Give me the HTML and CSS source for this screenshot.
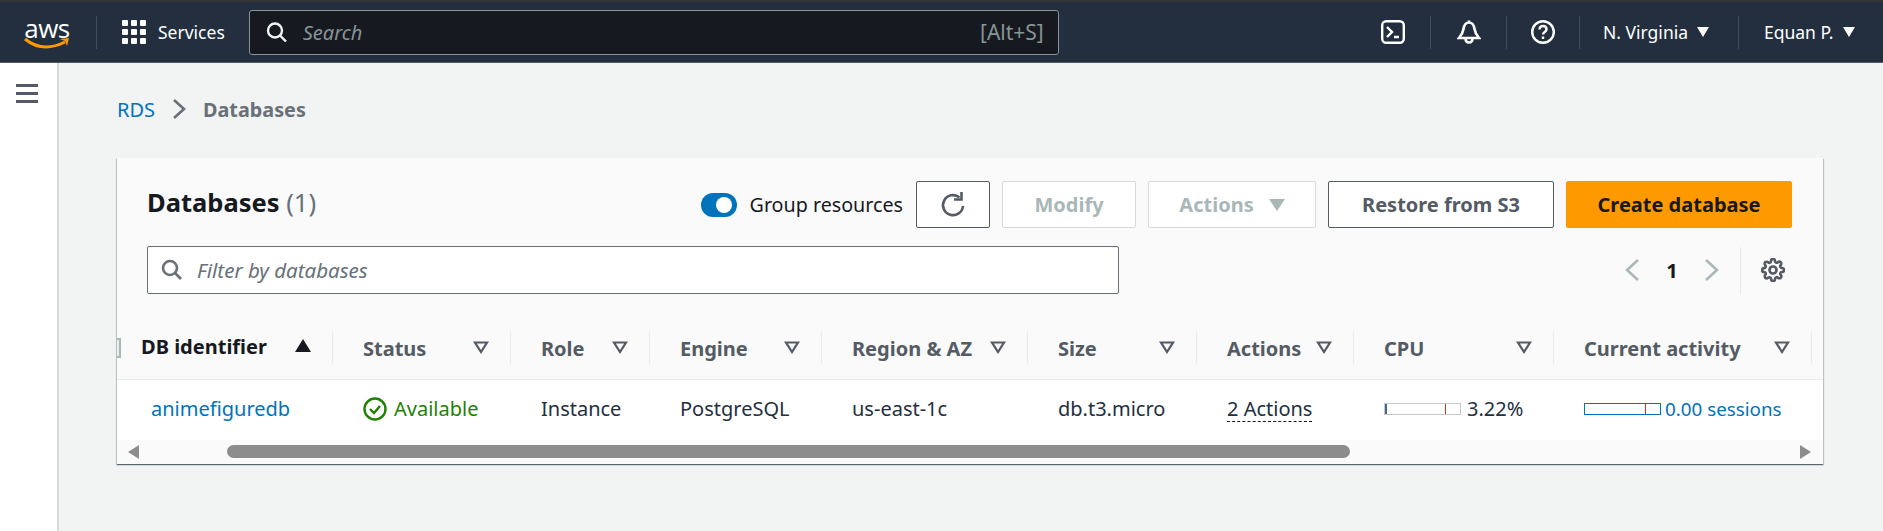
FILE: index.html
```html
<!DOCTYPE html>
<html lang="en">
<head>
    <meta charset="UTF-8">
    <meta name="viewport" content="width=device-width, initial-scale=1.0">
    <title>Databases</title>
    <link rel="stylesheet" href="styles.css">
</head>
<body>
    <nav class="topbar">
        <div class="logo">
            <span class="logo-text">aws</span>
            <svg class="logo-smile" width="46" height="14" viewBox="0 0 46 14"><path d="M1 2c6 5 13 8 21 8 7 0 13-2 19-5" fill="none" stroke="#f90" stroke-width="3"/><path d="M36 2l9-1-2 8-2-5z" fill="#f90"/></svg>
        </div>
        <span class="nav-divider logo-divider"></span>
        <div class="services">
            <svg width="24" height="24" viewBox="0 0 24 24" fill="#fff"><rect width="6" height="6" rx="1"/><rect x="9" width="6" height="6" rx="1"/><rect x="18" width="6" height="6" rx="1"/><rect y="9" width="6" height="6" rx="1"/><rect x="9" y="9" width="6" height="6" rx="1"/><rect x="18" y="9" width="6" height="6" rx="1"/><rect y="18" width="6" height="6" rx="1"/><rect x="9" y="18" width="6" height="6" rx="1"/><rect x="18" y="18" width="6" height="6" rx="1"/></svg>
            <span>Services</span>
        </div>
        <div class="nav-search">
            <svg width="22" height="20" viewBox="0 0 22 20" fill="none" stroke="#f2f3f3" stroke-width="2.4"><circle cx="9" cy="8.5" r="7"/><path d="M14 13.5l6 6"/></svg>
            <span class="nav-search-text">Search</span>
            <span class="nav-search-key">[Alt+S]</span>
        </div>
        <div class="nav-right">
            <div class="nav-icon">
                <svg width="24" height="24" viewBox="0 0 24 24" fill="none" stroke="#fff" stroke-width="2.4"><rect x="1.2" y="1.2" width="21.6" height="21.6" rx="4"/><path d="M6 7l5 5-5 5M13 17h5"/></svg>
            </div>
            <span class="nav-divider"></span>
            <div class="nav-icon nav-icon-bell">
                <svg width="24" height="24" viewBox="0 0 24 24" fill="none" stroke="#fff" stroke-width="2.6"><path d="M12 2.500c-3.500 0-5 3-5.500 6.500-.5 3.500-2 6-4.500 9h20c-2.500-3-4-5.500-4.500-9-.5-3.500-2-6.500-5.500-6.500zM12 .5v2M8.500 18c0 3 1.500 4.500 3.500 4.500s3.500-1.500 3.500-4.500"/></svg>
            </div>
            <span class="nav-divider"></span>
            <div class="nav-icon nav-icon-help">
                <svg width="24" height="24" viewBox="0 0 24 24" fill="none" stroke="#fff" stroke-width="2.4"><circle cx="12" cy="12" r="10.800"/><path d="M8.500 9.500c0-2 1.500-3.500 3.500-3.500s3.500 1.400 3.500 3.300c0 2.700-3.500 2.700-3.500 5.200"/><path d="M12 16.500v2.500"/></svg>
            </div>
            <span class="nav-divider"></span>
            <div class="nav-menu nav-region">N. Virginia <i class="caret"></i></div>
            <span class="nav-divider"></span>
            <div class="nav-menu nav-user">Equan P. <i class="caret"></i></div>
        </div>
    </nav>

    <div class="layout">
        <aside class="sidebar">
            <div class="hamburger"><span></span><span></span><span></span></div>
        </aside>

        <main class="content">
            <div class="breadcrumb">
                <a href="#">RDS</a>
                <svg width="14" height="20" viewBox="0 0 14 20" fill="none" stroke="#687078" stroke-width="2.6"><path d="M2 1l10 9-10 9"/></svg>
                <strong>Databases</strong>
            </div>

            <section class="card">
                <div class="card-head">
                    <div class="toolbar">
                        <h1>Databases <span>(1)</span></h1>
                        <div class="actions">
                            <label class="toggle-wrap"><span class="toggle"><span></span></span>Group resources</label>
                            <button class="btn btn-icon">
                                <svg width="26" height="26" viewBox="0 0 26 26" fill="none" stroke="#545b64" stroke-width="2.6"><path d="M19.500 5.500A10 10 0 1 0 23 14"/><path d="M21.500 0v7.500H14"/></svg>
                            </button>
                            <button class="btn btn-modify" disabled>Modify</button>
                            <button class="btn btn-actions" disabled>Actions <i class="caret caret-big"></i></button>
                            <button class="btn btn-restore">Restore from S3</button>
                            <button class="btn btn-primary">Create database</button>
                        </div>
                    </div>
                    <div class="filter-row">
                        <div class="filter">
                            <svg width="22" height="22" viewBox="0 0 22 22" fill="none" stroke="#687078" stroke-width="2.600"><circle cx="9" cy="9" r="7"/><path d="M14 14l6 6"/></svg>
                            <span>Filter by databases</span>
                        </div>
                        <div class="pager">
                            <svg width="16" height="22" viewBox="0 0 16 22" fill="none" stroke="#aab7b8" stroke-width="2.600"><path d="M14 1L3 11l11 10"/></svg>
                            <span class="page-num">1</span>
                            <svg width="16" height="22" viewBox="0 0 16 22" fill="none" stroke="#aab7b8" stroke-width="2.600"><path d="M2 1l11 10L2 21"/></svg>
                            <span class="pager-line"></span>
                            <svg class="gear" width="24" height="24" viewBox="0 0 24 24" fill="none" stroke="#545b64" stroke-width="2.600"><circle cx="12" cy="12" r="3.500"/><path d="M19.400 15a1.650 1.650 0 0 0 .33 1.820l.06.06a2 2 0 0 1 0 2.830 2 2 0 0 1-2.830 0l-.06-.06a1.650 1.650 0 0 0-1.820-.33 1.650 1.650 0 0 0-1 1.510V21a2 2 0 0 1-2 2 2 2 0 0 1-2-2v-.09A1.650 1.650 0 0 0 9 19.400a1.650 1.650 0 0 0-1.820.33l-.06.06a2 2 0 0 1-2.830 0 2 2 0 0 1 0-2.830l.06-.06a1.650 1.650 0 0 0 .33-1.820 1.650 1.650 0 0 0-1.510-1H3a2 2 0 0 1-2-2 2 2 0 0 1 2-2h.09A1.650 1.650 0 0 0 4.600 9a1.650 1.650 0 0 0-.33-1.820l-.06-.06a2 2 0 0 1 0-2.830 2 2 0 0 1 2.830 0l.06.06a1.650 1.650 0 0 0 1.820.33H9a1.650 1.650 0 0 0 1-1.510V3a2 2 0 0 1 2-2 2 2 0 0 1 2 2v.09a1.650 1.650 0 0 0 1 1.510 1.650 1.650 0 0 0 1.820-.33l.06-.06a2 2 0 0 1 2.830 0 2 2 0 0 1 0 2.830l-.06.06a1.650 1.650 0 0 0-.33 1.820V9a1.650 1.650 0 0 0 1.510 1H21a2 2 0 0 1 2 2 2 2 0 0 1-2 2h-.09a1.650 1.650 0 0 0-1.510 1z"/></svg>
                        </div>
                    </div>
                </div>

                <table class="db-table">
                    <colgroup>
                        <col class="col-id"><col class="col-status"><col class="col-role"><col class="col-engine"><col class="col-region"><col class="col-size"><col class="col-actions"><col class="col-cpu"><col class="col-activity"><col class="col-rest">
                    </colgroup>
                    <thead>
                        <tr>
                            <th class="th-sorted"><div class="th-inner"><i class="checkbox-edge"></i><span>DB identifier</span><svg width="16" height="13" viewBox="0 0 16 13"><path d="M8 0l8 13H0z" fill="#16191f"/></svg></div></th>
                            <th><div class="th-inner"><span>Status</span><svg class="sort" viewBox="0 0 16 13"><path d="M2 1.500h12L8 11z"/></svg></div></th>
                            <th><div class="th-inner"><span>Role</span><svg class="sort" viewBox="0 0 16 13"><path d="M2 1.500h12L8 11z"/></svg></div></th>
                            <th><div class="th-inner"><span>Engine</span><svg class="sort" viewBox="0 0 16 13"><path d="M2 1.500h12L8 11z"/></svg></div></th>
                            <th><div class="th-inner"><span>Region &amp; AZ</span><svg class="sort" viewBox="0 0 16 13"><path d="M2 1.500h12L8 11z"/></svg></div></th>
                            <th><div class="th-inner"><span>Size</span><svg class="sort" viewBox="0 0 16 13"><path d="M2 1.500h12L8 11z"/></svg></div></th>
                            <th><div class="th-inner"><span>Actions</span><svg class="sort" viewBox="0 0 16 13"><path d="M2 1.500h12L8 11z"/></svg></div></th>
                            <th><div class="th-inner"><span>CPU</span><svg class="sort" viewBox="0 0 16 13"><path d="M2 1.500h12L8 11z"/></svg></div></th>
                            <th><div class="th-inner"><span>Current activity</span><svg class="sort" viewBox="0 0 16 13"><path d="M2 1.500h12L8 11z"/></svg></div></th>
                            <th></th>
                        </tr>
                    </thead>
                    <tbody>
                        <tr>
                            <td class="td-id"><a href="#">animefiguredb</a></td>
                            <td>
                                <span class="status">
                                    <svg width="24" height="24" viewBox="0 0 24 24" fill="none" stroke="#1d8102" stroke-width="2.400"><circle cx="12" cy="12" r="10.500"/><path d="M7 12l4 4 6-7"/></svg>
                                    Available
                                </span>
                            </td>
                            <td>Instance</td>
                            <td>PostgreSQL</td>
                            <td>us-east-1c</td>
                            <td>db.t3.micro</td>
                            <td><span class="dashed">2 Actions</span></td>
                            <td>
                                <span class="metric">
                                    <span class="bar"><span class="bar-fill" style="width: 3.22%"></span><span class="bar-mark"></span></span>
                                    3.22%
                                </span>
                            </td>
                            <td>
                                <a class="metric metric-link" href="#">
                                    <span class="bar bar-blue"><span class="bar-mark"></span></span>
                                    0.00 sessions
                                </a>
                            </td>
                            <td></td>
                        </tr>
                    </tbody>
                </table>

                <div class="scrollbar">
                    <i class="arrow-left"></i>
                    <span class="thumb"></span>
                    <i class="arrow-right"></i>
                </div>
            </section>
        </main>
    </div>
</body>
</html>
```

FILE: styles.css
```css
* {
    box-sizing: border-box;
}
html, body {
    height: 100%;
}
body {
    margin: 0;
    overflow: hidden;
    font-family: "Noto Sans", Arial, sans-serif;
    font-size: 20px;
    color: #16191f;
    background-color: #f2f3f3;
}
a {
    color: #0073bb;
    text-decoration: none;
}
i {
    display: block;
}
svg {
    display: block;
    flex: none;
}

/* top nav */
.topbar {
    display: flex;
    align-items: center;
    height: 63px;
    padding-left: 24px;
    color: #fff;
    background-color: #232f3e;
    border-top: 2px solid #333;
    border-bottom: 1px solid #545b64;
}
.logo {
    width: 46px;
    height: 30px;
    margin-right: 26px;
    position: relative;
}
.logo-text {
    display: block;
    font-family: "Open Sans", sans-serif;
    font-size: 26px;
    line-height: 22px;
    text-align: center;
    letter-spacing: -0.5px;
}
.logo-smile {
    position: absolute;
    left: 0;
    top: 20px;
}
.nav-divider {
    width: 1px;
    height: 33px;
    background-color: #414d5c;
}
.services {
    display: flex;
    align-items: center;
    gap: 12px;
    margin-left: 25px;
    font-size: 17.5px;
}
.nav-search {
    display: flex;
    align-items: center;
    width: 810px;
    height: 45px;
    margin-left: 24px;
    padding: 0 14px 0 16px;
    background-color: #16191f;
    border: 1px solid #879596;
    border-radius: 3px;
    color: #879596;
}
.nav-search-text {
    margin-left: 15px;
    font-style: italic;
}
.nav-search-key {
    margin-left: auto;
    font-size: 21px;
}
.nav-right {
    display: flex;
    align-items: center;
    margin-left: auto;
}
.nav-icon {
    display: flex;
    justify-content: center;
    width: 75px;
}
.nav-icon-help {
    width: 72px;
    padding-right: 1px;
}
.nav-menu {
    display: flex;
    align-items: center;
    gap: 9px;
    font-size: 17.5px;
}
.nav-region {
    width: 158px;
    padding-left: 23px;
}
.nav-user {
    width: 144px;
    padding-left: 25px;
}
.caret {
    width: 0;
    height: 0;
    border-left: 6px solid transparent;
    border-right: 6px solid transparent;
    border-top: 10px solid #fff;
}
.caret-big {
    border-left-width: 8px;
    border-right-width: 8px;
    border-top: 12px solid #aab7b8;
}

/* page */
.layout {
    display: flex;
    height: 468px;
}
.sidebar {
    width: 59px;
    flex: none;
    padding: 21px 0 0 16px;
    background-color: #fff;
    border-right: 2px solid #d5dbdb;
}
.hamburger {
    display: flex;
    flex-direction: column;
    gap: 5px;
    width: 22px;
}
.hamburger span {
    height: 3px;
    background-color: #545b64;
}
.content {
    flex: 1;
    min-width: 0;
    padding: 34px 60px 0 58px;
}
.breadcrumb {
    display: flex;
    align-items: center;
    height: 24px;
    margin-bottom: 37px;
}
.breadcrumb svg {
    margin: 0 17px;
}
.breadcrumb strong {
    color: #687078;
    font-size: 19.8px;
    font-weight: 700;
}

/* card */
.card {
    width: 1706px;
    background-color: #fff;
    overflow: hidden;
    box-shadow: 0 1px 1px 0 rgba(0,28,36,0.5), 1px 1px 1px 0 rgba(0,28,36,0.15), -1px 1px 1px 0 rgba(0,28,36,0.15);
}
.card-head {
    padding: 23px 31px 37px 30px;
    background-color: #fafafa;
}
.toolbar {
    display: flex;
    align-items: center;
    height: 47px;
}
h1 {
    margin: 0 0 6px;
    font-size: 25.5px;
    font-weight: 700;
}
h1 span {
    font-weight: 400;
    color: #687078;
}
.actions {
    display: flex;
    align-items: center;
    margin-left: auto;
}
.toggle-wrap {
    display: flex;
    align-items: center;
    gap: 13px;
    margin-right: 13px;
    font-size: 19.7px;
}
.toggle {
    display: block;
    width: 36px;
    height: 24px;
    padding: 4px 3px 4px 15px;
    background-color: #0073bb;
    border-radius: 12px;
}
.toggle span {
    display: block;
    width: 16px;
    height: 16px;
    background-color: #fff;
    border-radius: 50%;
}
.btn {
    display: flex;
    align-items: center;
    justify-content: center;
    height: 47px;
    margin-left: 12px;
    padding: 0;
    font-family: inherit;
    font-size: 20px;
    font-weight: 700;
    color: #545b64;
    background-color: #fff;
    border: 1px solid #545b64;
    border-radius: 2px;
}
.toggle-wrap + .btn {
    margin-left: 0;
}
.btn:disabled {
    color: #aab7b8;
    border-color: #d5dbdb;
}
.btn-icon {
    width: 74px;
}
.btn-modify {
    width: 134px;
}
.btn-actions {
    width: 168px;
    gap: 15px;
}
.btn-restore {
    width: 226px;
}
.btn-primary {
    width: 226px;
    color: #16191f;
    background-color: #ff9900;
    border-color: #ff9900;
}
.filter-row {
    display: flex;
    align-items: center;
    margin-top: 18px;
}
.filter {
    display: flex;
    align-items: center;
    gap: 14px;
    width: 972px;
    height: 48px;
    padding-left: 13px;
    background-color: #fff;
    border: 1px solid #687078;
    border-radius: 2px;
    color: #687078;
    font-size: 20.5px;
    font-style: italic;
}
.pager {
    display: flex;
    align-items: center;
    margin-left: auto;
}
.page-num {
    width: 64px;
    text-align: center;
    font-weight: 700;
}
.pager-line {
    width: 1px;
    height: 47px;
    margin: 0 20px;
    background-color: #eaeded;
}
.gear {
    margin-right: 7px;
}

/* table */
.db-table {
    width: 1706px;
    table-layout: fixed;
    border-collapse: collapse;
}
.col-id { width: 216px; }
.col-status { width: 178px; }
.col-role { width: 139px; }
.col-engine { width: 172px; }
.col-region { width: 206px; }
.col-size { width: 169px; }
.col-actions { width: 157px; }
.col-cpu { width: 200px; }
.col-activity { width: 258px; }
.col-rest { width: 11px; }
th {
    padding: 0 0 15px;
    text-align: left;
    font-weight: 700;
    color: #545b64;
    background-color: #fafafa;
}
.th-inner {
    display: flex;
    align-items: center;
    justify-content: space-between;
    height: 33px;
    padding: 0 21px 0 30px;
    white-space: nowrap;
    border-right: 1px solid #eaeded;
}
.th-inner span {
    margin-top: 2px;
}
.sort {
    width: 16px;
    height: 13px;
    fill: none;
    stroke: #545b64;
    stroke-width: 2.2;
}
.th-sorted {
    color: #16191f;
}
.th-sorted .th-inner {
    position: relative;
    padding-left: 24px;
    padding-bottom: 4px;
}
.checkbox-edge {
    position: absolute;
    left: 0;
    top: 7px;
    width: 4px;
    height: 20px;
    background-color: #eaeded;
    border: 2px solid #aab7b8;
    border-left: none;
}
td {
    height: 60px;
    padding: 0 0 2px 30px;
    white-space: nowrap;
    color: #232f3e;
    background-color: #fff;
    border-top: 1px solid #eaeded;
}
.td-id {
    padding-left: 34px;
}
.status {
    display: flex;
    align-items: center;
    gap: 7px;
    color: #1d8102;
}
.dashed {
    display: inline-block;
    line-height: 24px;
    border-bottom: 1px dashed #16191f;
}
.metric {
    display: flex;
    align-items: center;
    gap: 6px;
}
.metric-link {
    gap: 4px;
    font-size: 18.8px;
}
.bar {
    position: relative;
    display: block;
    width: 77px;
    height: 12px;
    background-color: #fff;
    border: 1px solid #c4c8c8;
}
.bar-fill {
    display: block;
    height: 100%;
    background-color: #44688c;
}
.bar-mark {
    position: absolute;
    left: 60px;
    top: 0;
    width: 1px;
    height: 100%;
    background-color: #d13212;
}
.bar-blue {
    border-color: #0073bb;
}

/* table scrollbar */
.scrollbar {
    display: flex;
    align-items: center;
    height: 24px;
    padding: 0 12px 0 11px;
    background-color: #fafafa;
}
.arrow-left {
    border-top: 7px solid transparent;
    border-bottom: 7px solid transparent;
    border-right: 11px solid #8c8c8c;
}
.arrow-right {
    margin-left: auto;
    border-top: 7px solid transparent;
    border-bottom: 7px solid transparent;
    border-left: 11px solid #8c8c8c;
}
.thumb {
    width: 1123px;
    height: 13px;
    margin-left: 88px;
    background-color: #8c8c8c;
    border-radius: 7px;
}
```
